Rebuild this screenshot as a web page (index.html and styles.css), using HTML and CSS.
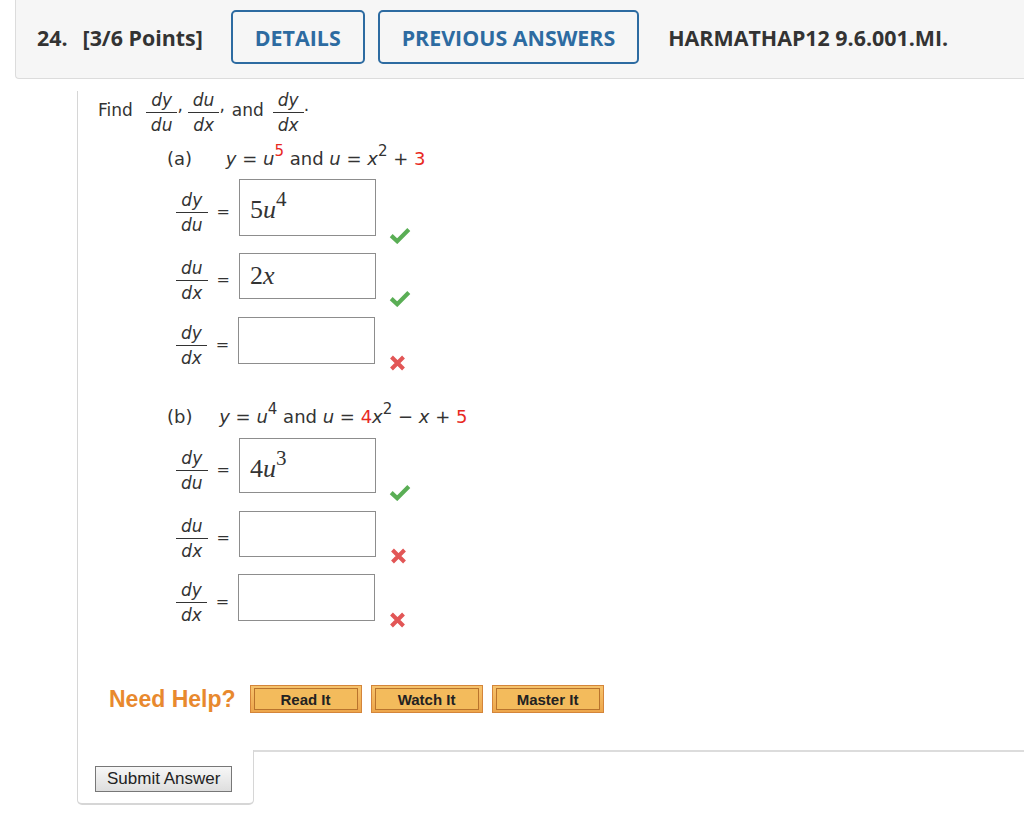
FILE: index.html
```html
<!DOCTYPE html>
<html>
<head>
<meta charset="utf-8">
<link rel="stylesheet" href="styles.css">
</head>
<body>
<div class="header">
  <span class="qnum">24.</span>
  <span class="pts">[3/6 Points]</span>
  <a class="hbtn hbtn-first">DETAILS</a>
  <a class="hbtn">PREVIOUS ANSWERS</a>
  <span class="code">HARMATHAP12 9.6.001.MI.</span>
</div>

<div class="qbody">
  <div class="find">
    <span class="txt">Find</span>
    <span class="frac frac-first"><span class="num">dy</span><span class="den">du</span></span><span class="punct">,</span>
    <span class="frac"><span class="num">du</span><span class="den">dx</span></span><span class="punct">,</span>
    <span class="txt txt-and">and</span>
    <span class="frac"><span class="num">dy</span><span class="den">dx</span></span><span class="punct">.</span>
  </div>

  <div class="plabel plabel-a">
    <span class="pl">(a)</span>
    <span class="expr expr-a"><span class="mv">y</span> = <span class="mv">u</span><span class="sup red">5</span> and <span class="mv">u</span> = <span class="mv">x</span><span class="sup">2</span> + <span class="red">3</span></span>
  </div>

  <div class="arow arow-a1">
    <span class="frac"><span class="num">dy</span><span class="den">du</span></span>
    <span class="eq">=</span>
    <div class="box h57 boxsup">5<span class="bv">u</span><span class="bsup">4</span></div>
    <svg class="mark" width="22" height="17" viewBox="0 0 22 17"><path d="M2.2 8.6 L8.2 14.2 L19.8 2.6" fill="none" stroke="#5aae55" stroke-width="4.2" stroke-linejoin="miter"/></svg>
  </div>
  <div class="arow arow-gap17">
    <span class="frac"><span class="num">du</span><span class="den">dx</span></span>
    <span class="eq">=</span>
    <div class="box h46">2<span class="bv">x</span></div>
    <svg class="mark" width="22" height="17" viewBox="0 0 22 17"><path d="M2.2 8.6 L8.2 14.2 L19.8 2.6" fill="none" stroke="#5aae55" stroke-width="4.2" stroke-linejoin="miter"/></svg>
  </div>
  <div class="arow arow-gap18">
    <span class="frac"><span class="num">dy</span><span class="den">dx</span></span>
    <span class="eq">=</span>
    <div class="box h47"></div>
    <svg class="mark markx" width="17" height="16" viewBox="0 0 17 16"><path d="M2.5 2 L14.5 14 M14.5 2 L2.5 14" fill="none" stroke="#e25656" stroke-width="4"/></svg>
  </div>

  <div class="plabel plabel-b">
    <span class="pl">(b)</span>
    <span class="expr expr-b"><span class="mv">y</span> = <span class="mv">u</span><span class="sup">4</span> and <span class="mv">u</span> = <span class="red">4</span><span class="mv">x</span><span class="sup">2</span> − <span class="mv">x</span> + <span class="red">5</span></span>
  </div>

  <div class="arow arow-b1">
    <span class="frac"><span class="num">dy</span><span class="den">du</span></span>
    <span class="eq">=</span>
    <div class="box h55 boxsup">4<span class="bv">u</span><span class="bsup">3</span></div>
    <svg class="mark" width="22" height="17" viewBox="0 0 22 17"><path d="M2.2 8.6 L8.2 14.2 L19.8 2.6" fill="none" stroke="#5aae55" stroke-width="4.2" stroke-linejoin="miter"/></svg>
  </div>
  <div class="arow arow-gap18">
    <span class="frac"><span class="num">du</span><span class="den">dx</span></span>
    <span class="eq">=</span>
    <div class="box h46"></div>
    <svg class="mark markx" width="17" height="16" viewBox="0 0 17 16"><path d="M2.5 2 L14.5 14 M14.5 2 L2.5 14" fill="none" stroke="#e25656" stroke-width="4"/></svg>
  </div>
  <div class="arow arow-gap17">
    <span class="frac"><span class="num">dy</span><span class="den">dx</span></span>
    <span class="eq">=</span>
    <div class="box h47"></div>
    <svg class="mark markx" width="17" height="16" viewBox="0 0 17 16"><path d="M2.5 2 L14.5 14 M14.5 2 L2.5 14" fill="none" stroke="#e25656" stroke-width="4"/></svg>
  </div>

  <div class="help">
    <span class="need">Need Help?</span>
    <a class="hb"><span class="hb-in">Read It</span></a>
    <a class="hb"><span class="hb-in">Watch It</span></a>
    <a class="hb"><span class="hb-in">Master It</span></a>
  </div>
</div>

<div class="foot">
  <div class="submit-cell"><button class="submit">Submit Answer</button></div>
  <div class="foot-rest"></div>
</div>
</body>
</html>
```

FILE: styles.css
```css
html, body {
  margin: 0;
  padding: 0;
  background: #ffffff;
}
body {
  width: 1024px;
  height: 820px;
  overflow: hidden;
  font-family: "DejaVu Sans", Verdana, sans-serif;
  font-size: 17px;
  color: #333333;
}

/* ---------- header ---------- */
.header {
  margin-left: 15px;
  height: 79px;
  box-sizing: border-box;
  padding: 0 0 4px 21px;
  background: #f6f6f6;
  border-left: 1px solid #dcdcdc;
  border-bottom: 1px solid #dcdcdc;
  border-bottom-left-radius: 4px;
  display: flex;
  align-items: center;
  font-family: "Open Sans", sans-serif;
  font-weight: 700;
  font-size: 21.4px;
  color: #333333;
}
.pts {
  margin-left: 15px;
}
.hbtn {
  height: 54px;
  box-sizing: border-box;
  border: 2px solid #2d6ba1;
  border-radius: 5px;
  padding: 0 22px;
  display: flex;
  align-items: center;
  color: #2d6ba1;
  margin-left: 13px;
}
.hbtn-first {
  margin-left: 28px;
}
.code {
  margin-left: 29px;
}

/* ---------- question body ---------- */
.qbody {
  margin-left: 77px;
  border-left: 1px solid #d6d6d6;
  padding-bottom: 37px;
}

.frac {
  display: inline-flex;
  flex-direction: column;
  align-items: stretch;
  font-style: oblique;
  font-size: 17px;
  line-height: 19px;
  text-align: center;
}
.num {
  padding: 0 5px 2px;
  border-bottom: 1px solid #333;
}
.den {
  padding: 3px 5px 0;
}

.find {
  display: flex;
  align-items: center;
  margin-top: 12px;
  padding-left: 20px;
}
.txt {
  line-height: 20px;
  margin-bottom: 6px;
}
.frac-first {
  margin-left: 13px;
}
.punct {
  line-height: 20px;
  margin-bottom: 16px;
  margin-right: 5px;
}
.txt-and {
  margin-left: 2px;
  margin-right: 9px;
}

.plabel {
  font-size: 18px;
  line-height: 22px;
  padding-left: 89px;
  white-space: nowrap;
}
.plabel-a {
  margin-top: 13px;
}
.plabel-b {
  margin-top: 42px;
}
.expr-a {
  margin-left: 28px;
}
.expr-b {
  margin-left: 21px;
}
.mv {
  font-style: oblique;
}
.sup {
  font-size: 15px;
  line-height: 0;
  vertical-align: 9px;
}
.red {
  color: #e8291f;
}

.arow {
  display: flex;
  align-items: center;
  padding-left: 98px;
}
.arow-a1 {
  margin-top: 9px;
}
.arow-b1 {
  margin-top: 10px;
}
.arow-gap17 {
  margin-top: 17px;
}
.arow-gap18 {
  margin-top: 18px;
}
.arow .frac {
  margin-top: 5px;
  margin-bottom: -5px;
}
.eq {
  line-height: 20px;
  margin: 4px 9px -4px 9px;
  font-size: 16px;
}
.box {
  width: 137px;
  box-sizing: border-box;
  border: 1px solid #8d8d8d;
  background: #ffffff;
  padding: 8px 0 0 10px;
  font-family: "Liberation Serif", "Times New Roman", serif;
  font-size: 26px;
  line-height: 28px;
  color: #333;
  white-space: nowrap;
}
.boxsup {
  padding-top: 16px;
}
.bv {
  font-style: italic;
}
.bsup {
  font-size: 21px;
  line-height: 0;
  vertical-align: 12px;
}
.h57 { height: 57px; }
.h55 { height: 55px; }
.h46 { height: 46px; }
.h47 { height: 47px; }

.mark {
  align-self: flex-end;
  margin-left: 13px;
  margin-bottom: -8px;
}
.markx {
  margin-left: 14px;
  margin-bottom: -7px;
}

/* ---------- help row ---------- */
.help {
  display: flex;
  align-items: center;
  margin-top: 64px;
  padding-left: 31px;
}
.need {
  font-family: "Liberation Sans", Arial, sans-serif;
  font-weight: 700;
  font-size: 23px;
  color: #e8892e;
  margin-right: 14px;
}
.hb {
  width: 112px;
  height: 28px;
  box-sizing: border-box;
  border: 1px solid #d4853a;
  background: linear-gradient(#f6c36c, #eda64b);
  padding: 2px 3px;
  margin-right: 9px;
  display: flex;
}
.hb-in {
  flex: 1;
  border: 1px solid #b9732c;
  background: #f3bb5c;
  display: flex;
  align-items: center;
  justify-content: center;
  font-family: "Liberation Sans", Arial, sans-serif;
  font-weight: 700;
  font-size: 15px;
  color: #222;
}

/* ---------- footer ---------- */
.foot {
  display: flex;
  margin-left: 77px;
}
.submit-cell {
  width: 177px;
  box-sizing: border-box;
  border-left: 1px solid #d6d6d6;
  border-right: 1px solid #d6d6d6;
  border-bottom: 2px solid #d6d6d6;
  border-radius: 0 0 5px 5px;
  padding: 16px 0 11px 17px;
}
.submit {
  height: 26px;
  box-sizing: border-box;
  padding: 0 11px;
  border: 1px solid #777;
  background: linear-gradient(#f7f7f7, #dedede);
  font-family: "Liberation Sans", Arial, sans-serif;
  font-size: 17px;
  color: #222;
  border-radius: 0;
}
.foot-rest {
  flex: 1;
  border-top: 2px solid #dcdcdc;
}
```
